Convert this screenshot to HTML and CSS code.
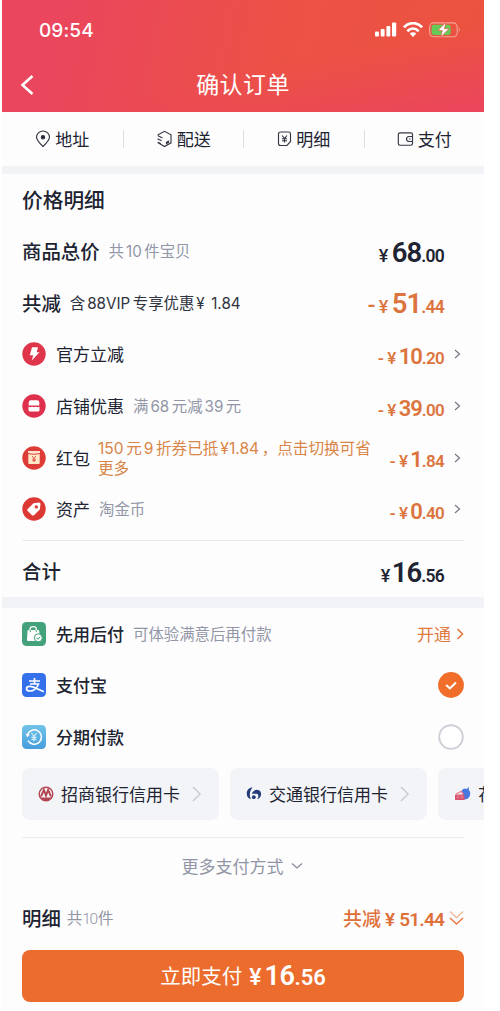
FILE: index.html
```html
<!DOCTYPE html>
<html lang="zh-CN">
<head>
<meta charset="utf-8">
<title>确认订单</title>
<link rel="stylesheet" href="styles.css">
</head>
<body>
<div class="phone">
  <header class="header">
    <div class="status">
      <span class="time">09:54</span>
      <span class="status-icons">
        <svg width="22" height="16" viewBox="0 0 22 16" fill="#fff"><rect x="0" y="9.500" width="3.900" height="5" rx="1"/><rect x="5.700" y="7" width="3.900" height="7.500" rx="1"/><rect x="11.400" y="4" width="3.900" height="10.500" rx="1"/><rect x="17" y="0.500" width="4.200" height="14" rx="1"/></svg>
        <svg width="20" height="16" viewBox="0 0 20 16" fill="none" stroke="#fff" stroke-width="2.800"><path d="M1 5.300C6-.2 14-.2 19 5.300M4.300 9.200c3.400-3.400 8-3.400 11.400 0"/><path d="M6.700 11.500c2-1.700 4.600-1.700 6.600 0L10 15z" fill="#fff" stroke="none"/></svg>
        <svg width="32" height="16" viewBox="0 0 32 16"><rect x=".7" y=".9" width="27.500" height="13.800" rx="4" fill="none" stroke="#f5a896" stroke-width="1.100"/><rect x="2.600" y="2.700" width="19" height="10.200" rx="2.300" fill="#67c957"/><path d="M29.800 5.500c1.300.5 1.300 3.700 0 4.200z" fill="#f5a896"/><path d="M16.800.3 9 8.500h4.300L11.800 15 20 6.700h-4.600z" fill="#fff" stroke="#ec5648" stroke-width=".7"/></svg>
      </span>
    </div>
    <div class="titlebar">
      <svg class="back" width="14" height="22" viewBox="0 0 14 22" fill="none" stroke="#fff" stroke-width="2.600"><path d="M12.500 2 2.500 11l10 9"/></svg>
      <h1>确认订单</h1>
    </div>
  </header>

  <nav class="nav">
    <a><svg width="16" height="18" viewBox="0 0 16 18"><path d="M8 16.500C4 12.700 1.500 10.200 1.500 7.300a6.500 6.300 0 0 1 13 0C14.500 10.200 12 12.700 8 16.500z"/><circle cx="8" cy="7.200" r="1.700" class="solid"/></svg><span>地址</span></a>
    <a><svg width="17" height="18" viewBox="0 0 17 18"><path d="M2 5.500V4.800L8.500 1.300l6.500 3.500v8L8.500 16.500 2 12.700v-.5M2 5.800l4.500 2.300M1.500 8.800l4 2M2 12.300l3 1.400"/><path d="m10.500 12.300 2-1.100v1.200l-2 1.100z" class="solid"/></svg><span>配送</span></a>
    <a><svg width="15" height="18" viewBox="0 0 15 18"><path d="M3.500 2h8q2 0 2 2v7.500L10 15.500H3.500q-2 0-2-2V4q0-2 2-2z"/><path d="m5 5.500 2.500 3 2.500-3M7.500 8.500v4M5 8.700h5M5 10.700h5"/></svg><span>明细</span></a>
    <a><svg width="17" height="18" viewBox="0 0 17 18"><path d="M15.500 6V4.500q0-1.700-1.700-1.700H3Q1.300 2.800 1.300 4.500v9Q1.300 15.200 3 15.200h10.800q1.700 0 1.700-1.700V12M15.500 6.500H12q-2.500.3-2.500 2.500t2.500 2.500h3.500zM12 9h1.500"/></svg><span>支付</span></a>
  </nav>
  <div class="band band-thin"></div>

  <section class="prices">
    <h2 class="section-title">价格明细</h2>
    <div class="row"><b class="major">商品总价</b><span class="note goods">共<i>10</i>件宝贝</span><span class="price big"><span class="yen">¥</span><span class="int">68</span>.00</span></div>
    <div class="row"><b class="major">共减</b><span class="note dark">含<i>88VIP</i>专享优惠<i>¥</i><i class="vip-sum">1.84</i></span><span class="price big orange"><span class="minus">-</span><span class="yen">¥</span><span class="int">51</span>.44</span></div>
    <div class="row">
      <svg class="badge" viewBox="0 0 24 24"><circle cx="12" cy="12" r="11.700" fill="#df354b"/><path d="M10 5.300h6l-1.300 4.900h2.800L9.800 18.500l1.400-5.300H7.800z" fill="#fff"/></svg>
      <span class="label">官方立减</span><span class="price orange"><span class="minus">-</span><span class="yen">¥</span><span class="int">10</span>.20</span><svg class="chev" viewBox="0 0 7 10"><path d="m1 1 4.500 4L1 9"/></svg></div>
    <div class="row">
      <svg class="badge" viewBox="0 0 24 24"><circle cx="12" cy="12" r="11.700" fill="#de304d"/><path d="M9 6.300h6q2.300 0 2.300 2.300v2.900H6.700V8.600Q6.700 6.300 9 6.300z" fill="#fff"/><path d="M6.500 12.800q1.800.8 3.600 0 1.900.8 3.800 0 1.800.8 3.600 0V16q0 1.500-1.500 1.500H8Q6.500 17.500 6.500 16z" fill="#fff"/></svg>
      <span class="label">店铺优惠</span><span class="note">满<i>68</i>元减<i>39</i>元</span><span class="price orange"><span class="minus">-</span><span class="yen">¥</span><span class="int">39</span>.00</span><svg class="chev" viewBox="0 0 7 10"><path d="m1 1 4.500 4L1 9"/></svg></div>
    <div class="row">
      <svg class="badge" viewBox="0 0 24 24"><circle cx="12" cy="12" r="11.700" fill="#dd3b35"/><path d="M6 5h12v2q-6 1.500-12 0z" fill="#ffe4cf"/><path d="M6.300 8q5.700 1.500 11.400 0v9q0 1-1 1H7.300q-1 0-1-1z" fill="#ffe9c8"/><path d="m10.200 10 1.800 2.500 1.800-2.500M12 12.500V16m-1.700-2.800h3.400m-3.400 1.400h3.400" fill="none" stroke="#dd3b35" stroke-width=".8"/></svg>
      <span class="label">红包</span><span class="note coupon"><i class="first">150</i>元<i>9</i>折券已抵<i>¥1.84</i>，点击切换可省<br>更多</span><span class="price orange"><span class="minus">-</span><span class="yen">¥</span><span class="int">1</span>.84</span><svg class="chev" viewBox="0 0 7 10"><path d="m1 1 4.500 4L1 9"/></svg></div>
    <div class="row">
      <svg class="badge" viewBox="0 0 24 24"><circle cx="12" cy="12" r="11.700" fill="#dc3934"/><path d="M11.500 6.200 17 5.500q1.500 0 1.500 1.500l-.7 5.500-5.800 5.700q-1 .8-2 0l-4.300-4.300q-1-1 0-2z" fill="#fff"/><circle cx="14.300" cy="9.900" r="1.700" fill="#dc3934"/></svg>
      <span class="label">资产</span><span class="note">淘金币</span><span class="price orange"><span class="minus">-</span><span class="yen">¥</span><span class="int">0</span>.40</span><svg class="chev" viewBox="0 0 7 10"><path d="m1 1 4.500 4L1 9"/></svg></div>
    <div class="row total"><b class="major">合计</b><span class="price big"><span class="yen">¥</span><span class="int">16</span>.56</span></div>
  </section>
  <div class="band"></div>

  <section class="pay">
    <div class="row">
      <svg class="badge" viewBox="0 0 24 24"><rect width="24" height="24" rx="4.500" fill="#43a27b"/><path d="M8 9V7.500q0-2.900 3.200-2.900t3.200 2.900V9" fill="none" stroke="#fff" stroke-width="1.300"/><path d="M6.500 8h9.500q1 0 1.200 1l1 10H6q-1.200 0-1-1.200L5.500 9q0-1 1-1z" fill="#fff"/><path d="M8.300 8v2.200m5.900-2.200v2.200" stroke="#43a27b"/><circle cx="16.300" cy="15.800" r="4" fill="#fff" stroke="#43a27b"/><path d="m14.500 15.800 1.400 1.500 2.400-2.600" fill="none" stroke="#43a27b"/></svg>
      <b class="label">先用后付</b><span class="note">可体验满意后再付款</span><span class="open">开通<svg width="8" height="12" viewBox="0 0 8 12"><path d="m1.500 1 5 5-5 5"/></svg></span></div>
    <div class="row">
      <svg class="badge" viewBox="0 0 24 24"><rect width="24" height="24" rx="4.500" fill="#3370ea"/><path d="M7 8h11M12.500 5v5.500M8 11h8.500c-1.500 4-5 7-8.500 7-2.200 0-3.500-.9-3.500-2.300s1.400-2.300 3.300-2.300c3.500 0 7.500 2.500 14 5.300" fill="none" stroke="#fff" stroke-width="1.700"/></svg>
      <b class="label">支付宝</b><svg class="radio" viewBox="0 0 26 26"><circle cx="13" cy="13" r="12.900" fill="#f16e2a"/><path d="m8.200 13 3.700 3.400 6.100-6" fill="none" stroke="#fff" stroke-width="2.100"/></svg></div>
    <div class="row">
      <svg class="badge" viewBox="0 0 24 24"><defs><linearGradient id="blue" x2="0" y2="1"><stop stop-color="#71c3e8"/><stop offset="1" stop-color="#469edc"/></linearGradient></defs><rect width="24" height="24" rx="4.500" fill="url(#blue)"/><path d="M5.500 9.500a7.200 7.200 0 1 1 .5 6.200" fill="none" stroke="#fff" stroke-width="1.500"/><path d="M3.700 8.500 8 9.700l-3 2.500z" fill="#fff"/><path d="m9.500 8 2.500 3.500L14.500 8M12 11.500v4.800m-2.500-4h5m-5 2h5" fill="none" stroke="#d9f1fb" stroke-width="1.200"/></svg>
      <b class="label">分期付款</b><svg class="radio" viewBox="0 0 26 26"><circle cx="13" cy="13" r="11.800" fill="#fff" stroke="#cfd0d7" stroke-width="2"/></svg></div>
    <div class="cards">
      <div class="card"><svg width="16" height="16" viewBox="0 0 16 16"><circle cx="8" cy="8" r="6.800" fill="#f4f5f7" stroke="#b34552" stroke-width="1.400"/><path d="M3 10.300 5.900 4 8 9.500 10.100 4l2.900 6.300" fill="none" stroke="#b34552" stroke-width="2"/><path d="M2.500 11.500h11Q11 14.800 8 14.800t-5.500-3.300z" fill="#b34552"/></svg><span>招商银行信用卡</span><svg class="card-chev" viewBox="0 0 10 16"><path d="m1 1 7 7-7 7"/></svg></div>
      <div class="card"><svg width="16" height="16" viewBox="0 0 16 16"><path d="M6.500 1.500C3 1.500.8 4 .8 7.500c0 3.200 1.500 5.200 4.200 5.800C3.500 10.500 3 5.500 6.500 1.500z" fill="#243b78"/><path d="M5.800 7.700C8 3.700 10.500 3 13 4.200c3.300 1.700 2.800 8-2 9 2-2 1.800-5.200-.5-5.500-1.700-.2-2.700.3-4.700 0z" fill="#263d78"/><circle cx="7.800" cy="11.200" r="1.900" fill="#233a76"/></svg><span>交通银行信用卡</span><svg class="card-chev" viewBox="0 0 10 16"><path d="m1 1 7 7-7 7"/></svg></div>
      <div class="card"><svg width="17" height="16" viewBox="0 0 17 16"><path d="M7.500 4.500 10 2.500l2.500.5L15 1l-.3 2.500q2.500 3 1 6.500-1.500 3.500-5.700 3.500z" fill="#4878df"/><path d="M1 8.500h9.500V14H1z" fill="#d6526d"/><path d="M2 8 7 5.500 9.500 8M2.500 10h2v2h-2m4-2h2v2h-2" fill="none" stroke="#e57d8c" stroke-width="1.200"/></svg><span>花</span></div>
    </div>
    <div class="more"><span>更多支付方式</span><svg width="12" height="8" viewBox="0 0 12 8"><path d="m1 1.500 5 4.500 5-4.500"/></svg></div>
  </section>

  <footer class="footer">
    <div class="summary"><b class="major">明细</b><span class="count">共<i>10</i>件</span><span class="saved">共减<span class="saved-yen">¥</span><span class="saved-number">51.44</span></span><svg width="15" height="16" viewBox="0 0 15 16" fill="none" stroke="#e87642" stroke-width="1.400"><path d="m1 1.500 6.500 6 6.500-6" opacity=".5"/><path d="m1 8 6.500 6L14 8"/></svg></div>
    <button class="submit"><span>立即支付</span><span class="price"><span class="yen">¥</span><span class="int">16</span>.56</span></button>
  </footer>
</div>
</body>
</html>
```
FILE: styles.css
```css
* { box-sizing: border-box; }
body { margin: 0; background: #fff; font-family: "Noto Sans CJK SC", sans-serif; color: #202331; }
h1, h2 { margin: 0; }
i { font-style: normal; font-family: Inter, sans-serif; }
svg { flex: none; display: block; }
.phone { width: 482px; height: 1011px; margin-left: 2px; overflow: hidden; background: #fdfdfd; }

.header { height: 112px; color: #fff; background: linear-gradient(168deg, rgba(235,70,91,0) 58%, #eb465b 96%), linear-gradient(102deg, #ea465d 12%, #ec5145 58%, #eb533f 100%); }
.status { height: 58px; padding: 2px 23px 0 37px; display: flex; align-items: center; justify-content: space-between; }
.time { font: 500 19px Inter, sans-serif; letter-spacing: .1px; }
.status-icons { display: flex; align-items: center; gap: 6px; }
.titlebar { height: 54px; padding-left: 18px; display: flex; align-items: center; }
.titlebar h1 { flex: 1; padding: 0 32px 4px 0; text-align: center; font-size: 23px; line-height: 32px; font-weight: 400; letter-spacing: .4px; }

.nav { height: 54px; display: grid; grid-template-columns: repeat(4, 1fr); align-items: center; }
.nav a { display: flex; justify-content: center; align-items: center; gap: 4px; height: 18px; font-size: 17px; }
.nav span { padding-bottom: 2px; }
.nav a + a { border-left: 1px solid #dddee3; }
.nav path, .nav circle { fill: none; stroke: #343744; stroke-width: 1.15; }
.nav .solid { fill: #242734; }
.band { height: 11px; background: #f2f3f6; }
.band-thin { height: 8px; }

.prices { height: 423px; padding: 0 20px; }
.section-title { height: 52px; line-height: 50px; font-size: 20.700px; font-weight: 500; }
.row { height: 51.600px; display: flex; align-items: center; white-space: nowrap; padding-bottom: 1px; }
.major { font-size: 19.400px; font-weight: 500; padding-bottom: 1px; }
.label { margin-left: 10px; font-size: 17px; padding-bottom: 1px; }
b.label { font-weight: 500; }
.badge { width: 24px; height: 24px; }
.note { margin-left: 9px; font-size: 15.400px; color: #9296a7; padding-bottom: 2px; }
.note i { margin: 0 2.500px 0 2px; font-size: 15.200px; }
.note.dark { color: #303341; font-size: 15.400px; }
.note .vip-sum { margin-left: 4px; }
.coupon { margin-left: 8px; font-size: 15.600px; line-height: 18px; color: #d98548; padding-bottom: 2px; }
.coupon i { font-size: 15.600px; }
.note .first { margin-left: 0; }
.price { margin-left: auto; margin-right: 20px; font-family: Roboto, sans-serif; font-weight: 600; font-size: 17px; line-height: 30px; letter-spacing: -.7px; padding-top: 6px; }
.price .int { font-size: 22px; letter-spacing: -1px; }
.price .yen { font-size: 17px; margin-right: 3px; font-weight: 500; }
.price .minus { margin-right: 4px; }
.price.big { font-size: 17.500px; }
.price.big .int { font-size: 27.500px; letter-spacing: -1px; }
.big .minus { font-size: 22px; }
.price.big .yen { font-size: 18px; margin-right: 4px; }
.orange { color: #dc743d; }
.chev { width: 7px; height: 10px; margin-left: -10px; margin-right: 3px; fill: none; stroke: #777a83; stroke-width: 1.200; }
.total { height: 57px; margin-top: 4px; padding-top: 6px; border-top: 1px solid #e9eaed; }
.total .price .yen { margin-right: 2px; }

.pay { padding: 0 20px; }
.pay .row { padding-bottom: 0; }
.open { display: flex; align-items: center; gap: 5px; margin-left: auto; color: #df793f; font-size: 17px; }
.open svg { fill: none; stroke: #df793f; stroke-width: 1.600; }
.radio { width: 26px; height: 26px; margin-left: auto; }
.cards { width: 462px; height: 52px; margin-top: 5px; display: flex; gap: 11px; overflow: hidden; }
.card { width: 197px; height: 52px; flex: none; display: flex; align-items: center; padding: 0 17px 0 16px; border-radius: 8px; background: #f3f4f7; font-size: 17px; white-space: nowrap; }
.card span { margin: 0 auto 0 7px; }
.card-chev { width: 10px; height: 16px; fill: none; stroke: #c6c8cf; stroke-width: 1.400; }
.more { display: flex; justify-content: center; align-items: center; gap: 7px; height: 57px; margin-top: 17px; padding-right: 2px; border-top: 1px solid #eaebee; color: #9195a5; font-size: 17px; }
.more svg { fill: none; stroke: #858998; stroke-width: 1.200; }
.footer { padding: 0 20px; }
.summary { height: 48px; display: flex; align-items: center; }
.count { margin-left: 6px; padding-bottom: 2px; font-size: 15.500px; color: #9296a6; }
.count i { font-family: Roboto, sans-serif; font-weight: 300; letter-spacing: -1.300px; margin-right: 1px; }
.saved { margin-left: auto; margin-right: 5px; font-size: 19px; font-weight: 500; color: #df7039; display: flex; align-items: baseline; }
.saved-yen, .saved-number { font-family: Roboto, sans-serif; font-weight: 600; }
.saved-yen { margin: 0 4px; }
.saved-number { letter-spacing: -.8px; }
.submit { width: 442px; height: 52px; margin: 8px 0 0; padding: 0; border: 0; border-radius: 8px; background: #eb6c2c; color: #fff; display: flex; align-items: center; justify-content: center; gap: 7px; font-family: inherit; font-size: 20.500px; }
.submit > span:first-child { padding-bottom: 1px; }
.submit .price { margin: 0; font-size: 22px; padding-top: 3px; letter-spacing: 0; }
.submit .int { font-size: 27px; letter-spacing: -.4px; }
.submit .yen { font-size: 23px; }
```
